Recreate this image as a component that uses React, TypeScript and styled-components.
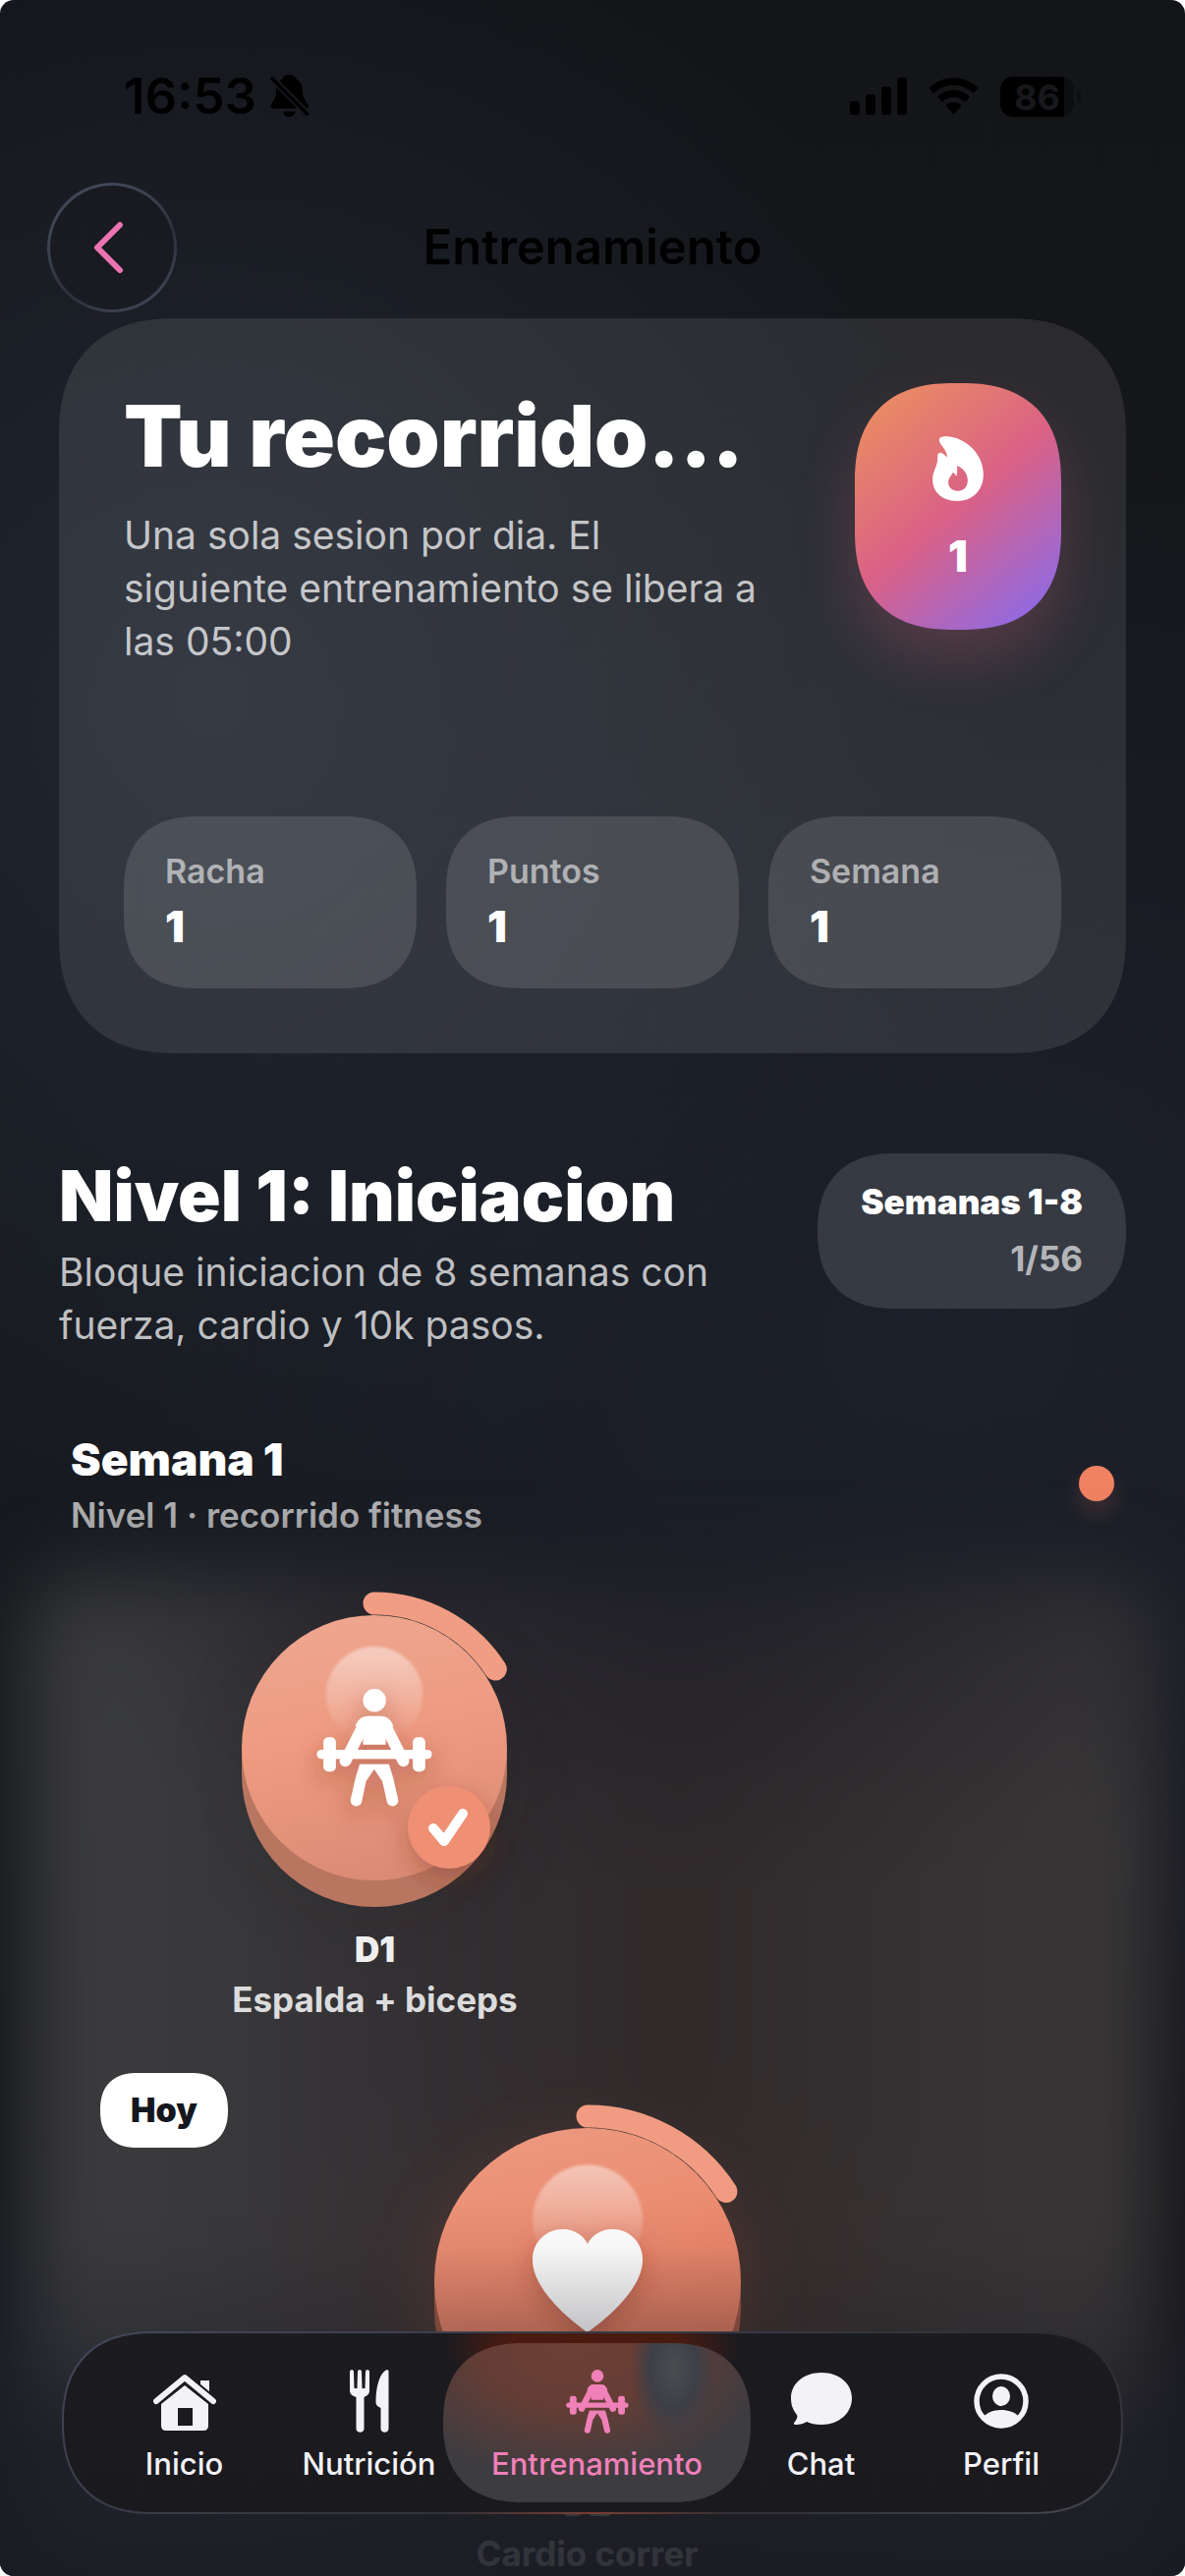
import React from "react";
import styled, { createGlobalStyle, css } from "styled-components";

const GlobalStyle = createGlobalStyle`
  *, *::before, *::after { box-sizing: border-box; }
  body {
    margin: 0;
    background: #ffffff;
    font-family: Inter, "Liberation Sans", sans-serif;
    -webkit-font-smoothing: antialiased;
  }
  h1, h2, h3, p { margin: 0; }
  button { font: inherit; color: inherit; border: 0; padding: 0; background: none; cursor: pointer; }
`;

/* Continuous corners where the browser knows them, plain arcs elsewhere. */
const smoothCorners = (radius: number) => css`
  border-radius: ${radius}px;

  @supports (corner-shape: squircle) {
    corner-shape: superellipse(1.25);
    border-radius: ${Math.round(radius * 1.25)}px;
  }
`;

/* ---------- shell ---------- */

const Screen = styled.div`
  position: relative;
  height: 100vh;
  overflow: hidden;
  border-radius: 14px;
  color: #ffffff;
  background:
    radial-gradient(ellipse 66% 32% at 18% 27%, #202631 0%, rgba(32, 38, 49, 0) 100%),
    radial-gradient(ellipse 90% 34% at 80% 52%, #1c202b 0%, rgba(28, 32, 43, 0) 100%),
    radial-gradient(ellipse 50% 16% at 24% 98%, #1d212b 0%, rgba(29, 33, 43, 0) 100%),
    linear-gradient(#141519 0%, #171a1e 50%, #121317 100%);
`;

const StatusBar = styled.div`
  display: flex;
  align-items: center;
  justify-content: space-between;
  height: 186px;
  padding: 58px 106px 48px 126px;
  color: #000000;
`;

const StatusGroup = styled.div<{ $gap: number }>`
  display: flex;
  align-items: center;
  gap: ${(p) => p.$gap}px;
`;

const Clock = styled.span`
  font-size: 51px;
  line-height: 60px;
  font-weight: 600;
`;

const AppBar = styled.header`
  display: grid;
  grid-template-columns: 132px 1fr 132px;
  align-items: center;
  padding: 0 48px;
`;

const BackButton = styled.button`
  display: grid;
  place-items: center;
  width: 132px;
  height: 132px;
  padding-right: 6px;
  border-radius: 50%;
  border: 3px solid transparent;
  background:
    linear-gradient(#191a20, #191b23) padding-box,
    linear-gradient(150deg, #444b5d 0%, #3a4150 35%, #2c303a 60%, #454c5e 100%) border-box;
`;

const ScreenTitle = styled.h1`
  text-align: center;
  color: #000000;
  font-size: 49px;
  line-height: 60px;
  font-weight: 600;
`;

const Content = styled.main`
  display: flex;
  flex-direction: column;
  padding: 6px 60px 0;
`;

/* ---------- summary card ---------- */

const SummaryCard = styled.section`
  display: flex;
  flex-direction: column;
  gap: 151px;
  padding: 66px;
  background: rgba(255, 255, 255, 0.095);
  ${smoothCorners(96)}
`;

const SummaryTop = styled.div`
  display: flex;
  align-items: flex-start;
  justify-content: space-between;
`;

const SummaryText = styled.div`
  max-width: 660px;
`;

const Headline = styled.h2`
  font-size: 87px;
  line-height: 108px;
  font-weight: 900;
  white-space: nowrap;
`;

const Paragraph = styled.p<{ $top: number }>`
  margin-top: ${(p) => p.$top}px;
  font-size: 39px;
  line-height: 54px;
  font-weight: 400;
  color: rgba(255, 255, 255, 0.72);
`;

const StreakBadge = styled.div`
  display: flex;
  flex-direction: column;
  align-items: center;
  justify-content: center;
  gap: 28px;
  width: 210px;
  height: 251px;
  padding-top: 6px;
  background: linear-gradient(140deg, #ea8c62 8%, #da6186 50%, #8f6ae4 92%);
  box-shadow: 0 30px 60px rgba(218, 97, 134, 0.24);
  ${smoothCorners(80)}
`;

const StreakCount = styled.span`
  font-size: 44px;
  line-height: 56px;
  font-weight: 900;
`;

const StatGrid = styled.dl`
  display: grid;
  grid-template-columns: repeat(3, 1fr);
  gap: 30px;
  margin: 0;
`;

const Stat = styled.div`
  display: flex;
  flex-direction: column;
  gap: 8px;
  padding: 36px 42px 35px;
  background: rgba(255, 255, 255, 0.12);
  ${smoothCorners(60)}
`;

const StatLabel = styled.dt`
  font-size: 34px;
  line-height: 40px;
  font-weight: 600;
  color: rgba(255, 255, 255, 0.58);
`;

const StatValue = styled.dd`
  margin: 0;
  font-size: 44px;
  line-height: 56px;
  font-weight: 900;
`;

/* ---------- level ---------- */

const LevelHeader = styled.section`
  display: flex;
  align-items: flex-start;
  justify-content: space-between;
  margin-top: 102px;
`;

const LevelText = styled.div`
  max-width: 700px;
`;

const LevelTitle = styled.h2`
  font-size: 72px;
  line-height: 86px;
  font-weight: 900;
  white-space: nowrap;
`;

const RangePill = styled.div`
  display: flex;
  flex-direction: column;
  align-items: flex-end;
  gap: 18px;
  padding: 29px 44px 31px;
  font-size: 35px;
  line-height: 40px;
  font-weight: 900;
  white-space: nowrap;
  background: rgba(255, 255, 255, 0.12);
  ${smoothCorners(79)}
`;

const RangeProgress = styled.span`
  font-weight: 700;
  color: rgba(255, 255, 255, 0.65);
`;

const WeekHeader = styled.section`
  display: flex;
  align-items: center;
  justify-content: space-between;
  margin-top: 82px;
  padding: 0 12px;
`;

const WeekTitle = styled.h3`
  font-size: 46px;
  line-height: 54px;
  font-weight: 900;
`;

const WeekSubtitle = styled.p`
  margin-top: 10px;
  font-size: 35px;
  line-height: 40px;
  font-weight: 600;
  color: rgba(255, 255, 255, 0.66);
`;

const WeekDot = styled.span`
  width: 36px;
  height: 36px;
  border-radius: 50%;
  background: #f08262;
  box-shadow: 0 12px 24px rgba(240, 130, 98, 0.2);
`;

/* ---------- path ---------- */

const Path = styled.section`
  position: relative;
  display: flex;
  flex-direction: column;
  gap: 55px;
  padding-top: 58px;

  &::before {
    content: "";
    position: absolute;
    inset: 40px -30px 0;
    border-radius: 60px;
    filter: blur(40px);
    background:
      radial-gradient(ellipse 34% 32% at 50% 80%, rgba(120, 58, 40, 0.18), rgba(120, 58, 40, 0)),
      radial-gradient(ellipse 60% 30% at 60% 0%, rgba(27, 30, 40, 0.7), rgba(27, 30, 40, 0)),
      linear-gradient(90deg, #3c3d40 0%, #39393c 14%, #332f32 36%, #2f292a 58%, #363233 80%, #3b3839 100%);
  }
`;

const PathRow = styled.div`
  position: relative;
  display: grid;
  align-items: start;
  justify-items: start;

  > * { grid-area: 1 / 1; }
`;

const Node = styled.button<{ $at: number; $top: number }>`
  display: flex;
  flex-direction: column;
  align-items: center;
  gap: 11px;
  width: 400px;
  margin: ${(p) => p.$top}px 0 0 calc(${(p) => p.$at}% - 200px);
  font-size: 35px;
  line-height: 40px;

  svg { display: block; overflow: visible; margin-bottom: 12px; }
`;

const NodeDay = styled.span`
  font-weight: 900;
  color: #efefef;
`;

const NodeName = styled.span`
  font-weight: 700;
  color: #dcdcdd;
`;

const TodayTag = styled.span`
  margin-left: 42px;
  padding: 18px 31px;
  background: #ffffff;
  color: #15171e;
  font-size: 34px;
  line-height: 40px;
  font-weight: 900;
  ${smoothCorners(38)}
`;

/* ---------- bottom bar ---------- */

const BottomFade = styled.div`
  position: absolute;
  inset: auto 0 0;
  height: 380px;
  pointer-events: none;
  background: linear-gradient(
    180deg,
    rgba(27, 29, 37, 0) 0%,
    rgba(27, 29, 37, 0.04) 12%,
    rgba(27, 29, 37, 0.26) 34%,
    rgba(27, 29, 37, 0.86) 66%,
    rgba(26, 28, 36, 0.88) 100%
  );
`;

const TabBar = styled.nav`
  position: absolute;
  inset: auto 63px 63px;
  display: grid;
  grid-template-columns: 225fr 151fr 313fr 143fr 224fr;
  padding: 10px;
  border: 2px solid transparent;
  background:
    radial-gradient(ellipse 150px 46px at 50% 8%, rgba(82, 28, 14, 0.85) 60%, rgba(82, 28, 14, 0) 100%) padding-box,
    linear-gradient(#1c1b20, #1a1a1e) padding-box,
    radial-gradient(ellipse 150px 20px at 50% 100%, #7b3f33, rgba(123, 63, 51, 0)) border-box,
    linear-gradient(160deg, #43475a 0%, #383a45 40%, #2b2b30 70%, #45464f 100%) border-box;
  ${smoothCorners(93)}
`;

const Tab = styled.button<{ $active?: boolean }>`
  display: flex;
  flex-direction: column;
  align-items: center;
  gap: 6px;
  height: 162px;
  padding-top: 21px;
  font-size: 31px;
  line-height: 40px;
  font-weight: 500;
  color: ${(p) => (p.$active ? "#f080b8" : "#f2f2f7")};
  ${smoothCorners(81)}

  svg { display: block; height: 76px; }

  ${(p) =>
    p.$active &&
    css`
      background:
        radial-gradient(ellipse 44px 74px at 75% 16%, #4c4d51 0%, #3d3f46 55%, rgba(61, 63, 70, 0) 100%),
        radial-gradient(ellipse 66% 88% at 42% 0%, #6e4036 0%, #653d35 45%, rgba(80, 60, 58, 0) 100%),
        #3d3c41;
    `}
`;

/* ---------- drawings ---------- */

const BellSlash = () => (
  <svg width="40" height="44" viewBox="0 0 40 44" aria-hidden="true">
    <path
      d="M19 0C23 0 25 2 26 4C31 7 33 11 33 17C33 25 38 28 38.500 31C39 33 38 34.500 36 34.500H3C1 34.500 0 33 0.500 31C1.500 28 6 25 6 17C6 10 8 7 12.500 4C13.500 2 15 0 19 0Z"
      fill="#000"
    />
    <path d="M13 37.500H25.500C25 41 22 43 19 43C16 43 13.500 41 13 37.500Z" fill="#000" />
    <path d="M1 3L39 41" stroke="#17191e" strokeWidth="7" />
    <path d="M2 4L37.500 40" stroke="#000" strokeWidth="3.500" strokeLinecap="round" />
  </svg>
);

const Signal = () => (
  <svg width="58" height="38" viewBox="0 0 58 38" fill="#000" aria-hidden="true">
    <rect x="0" y="24" width="10" height="14" rx="3" />
    <rect x="16" y="17" width="10" height="21" rx="3" />
    <rect x="32" y="9" width="10" height="29" rx="3" />
    <rect x="48" y="0" width="10" height="38" rx="3" />
  </svg>
);

const Wifi = () => (
  <svg width="51" height="38" viewBox="0 0 52 38" fill="#000" aria-hidden="true">
    <path d="M26 0C36 0 45 4 51.500 10.500L46.500 16C41 10.700 34 7.500 26 7.500C18 7.500 11 10.700 5.500 16L0.500 10.500C7 4 16 0 26 0Z" />
    <path d="M26 12.500C32.500 12.500 38.500 15 43 19.500L37.800 25C34.600 22 30.500 20 26 20C21.500 20 17.400 22 14.200 25L9 19.500C13.500 15 19.500 12.500 26 12.500Z" />
    <path d="M26 25C29.200 25 32 26.200 34.500 28.500L26 37.500L17.500 28.500C20 26.200 22.800 25 26 25Z" />
  </svg>
);

const BatteryShell = styled.span`
  display: flex;
  align-items: center;
  gap: 3px;

  &::after {
    content: "";
    width: 4px;
    height: 13px;
    border-radius: 0 4px 4px 0;
    background: #0d0e11;
  }
`;

const BatteryLevel = styled.span`
  width: 75px;
  height: 41px;
  border-radius: 13px;
  background: linear-gradient(90deg, #000000 87%, #0d0e11 87%);
  color: #17181c;
  font-size: 36px;
  line-height: 42px;
  font-weight: 700;
  text-align: center;
`;

const Chevron = () => (
  <svg width="32" height="54" viewBox="0 0 32 54" fill="none" aria-hidden="true">
    <path d="M27 4L4 27L27 50" stroke="#ea73b0" strokeWidth="6" strokeLinecap="round" strokeLinejoin="round" />
  </svg>
);

const Flame = () => (
  <svg width="52" height="66" viewBox="327 249 155 198" fill="#fff" fillRule="evenodd" aria-hidden="true">
    <path d="M347 262C346 252 358 249 368 249C430 252 482 305 482 365C482 415 448 447 402 447C356 447 327 420 327 382C327 350 344 342 342 312C341 300 350 297 356 301C364 306 369 311 372 315C371 290 349 277 347 262ZM402 339C418 345 434 362 434 384C434 405 420 416 404 416C387 416 375 405 375 390C375 375 385 370 389 359C394 362 397 367 399 372C402 365 402 350 402 339Z" />
  </svg>
);

/* Lifter figure on a 352 x 360 grid; `fill` also colours the arm strokes. */
const LifterShape = ({ fill }: { fill: string }) => (
  <g fill={fill}>
    <circle cx="176" cy="35" r="35" />
    <path d="M141 170V150L118 112Q128 83 158 83H193Q223 83 233 112L210 150V170Z" />
    <path d="M146 104L87 220M205 104L264 220" stroke={fill} strokeWidth="35" strokeLinecap="round" />
    <rect x="0" y="186" width="351" height="28" rx="14" />
    <rect x="20" y="148" width="38" height="105" rx="15" />
    <rect x="293" y="148" width="38" height="105" rx="15" />
    <path d="M131 230H220L233 272L248 338A17 17 0 0 1 214 344L200 282L175 245L150 282L137 344A17 17 0 0 1 103 338L118 272Z" />
  </g>
);

const HomeIcon = () => (
  <svg width="64" height="76" viewBox="0 -10 64 76" aria-hidden="true">
    <path d="M48 7H57V26L48 18Z" fill="currentColor" />
    <path d="M3 28L32 4L61 28" fill="none" stroke="#1b1b20" strokeWidth="10" strokeLinejoin="round" />
    <path d="M3 28L32 4L61 28" fill="none" stroke="currentColor" strokeWidth="6" strokeLinecap="round" strokeLinejoin="round" />
    <path
      d="M32 12L56 31V53Q56 58 51 58H13Q8 58 8 53V31ZM25 35V53H40V35Z"
      fill="currentColor"
      fillRule="evenodd"
    />
  </svg>
);

const CutleryIcon = () => (
  <svg width="40" height="76" viewBox="0 -6 40 76" fill="currentColor" aria-hidden="true">
    <path d="M2 0C3 0 4 1 4 2L4.500 19H7.500L8 2C8 1 9 0 10 0C11 0 12 1 12 2L12.500 19H15.500L16 2C16 1 17 0 18 0C19 0 20 1 20 2V21C20 25 18 26 14.500 28L14.500 60C14.500 65 6.500 65 6.500 60L6.500 28C2 26 0 25 0 21V2C0 1 1 0 2 0Z" />
    <path d="M38 0C39 0 39.500 1 39.500 2V60C39.500 65 31.500 65 31.500 60V39C28 37 26.500 36 26.500 33C26.500 18 30 5 36 1Z" />
  </svg>
);

const LifterIcon = () => (
  <svg width="66" height="76" viewBox="-7 -30 366 414" aria-hidden="true">
    <LifterShape fill="currentColor" />
  </svg>
);

const ChatIcon = () => (
  <svg width="64" height="76" viewBox="0 -9 64 76" fill="currentColor" aria-hidden="true">
    <path d="M32 0C50 0 63 11 63 26C63 41 50 53 32 53C26 53 21 52 17 50C14 52 10 53 6 53C4 53 3 52 5 50C7 47 8 45 7 43C3 38 1 33 1 26C1 11 14 0 32 0Z" />
  </svg>
);

const ProfileIcon = () => (
  <svg width="56" height="76" viewBox="0 -10 56 76" aria-hidden="true">
    <circle cx="28" cy="28" r="25" fill="none" stroke="currentColor" strokeWidth="5.500" />
    <ellipse cx="28" cy="23" rx="9" ry="10" fill="currentColor" />
    <path d="M10 44C14 39 21 37 28 37C35 37 42 39 46 44C42 50 35 54 28 54C21 54 14 50 10 44Z" fill="currentColor" />
  </svg>
);

type DiscProps = {
  id: string;
  radius: number;
  top: string;
  middle: string;
  bottom: string;
  base: string;
  ring: string;
  gloss: number;
  glow?: boolean;
  children: React.ReactNode;
};

const DEPTH = 27;
const RING = 24;

const Disc = ({ id, radius: r, top, middle, bottom, base, ring, gloss, glow, children }: DiscProps) => {
  const ringRadius = r + RING / 2;
  const c = r + RING;
  const angle = (57 * Math.PI) / 180;
  const endX = c + ringRadius * Math.sin(angle);
  const endY = c - ringRadius * Math.cos(angle);
  return (
    <svg width={c * 2} height={c + r + DEPTH} viewBox={`0 0 ${c * 2} ${c + r + DEPTH}`} aria-hidden="true">
      <defs>
        <linearGradient id={`${id}-face`} x1="0.4" y1="0" x2="0.6" y2="1">
          <stop offset="0" stopColor={top} />
          <stop offset="0.45" stopColor={middle} />
          <stop offset="1" stopColor={bottom} />
        </linearGradient>
        <linearGradient id={`${id}-gloss`} x1="0" y1="0" x2="0" y2="1">
          <stop offset="0" stopColor="#fff" stopOpacity="0.46" />
          <stop offset="1" stopColor="#fff" stopOpacity="0" />
        </linearGradient>
        <filter id={`${id}-soft`} x="-50%" y="-50%" width="200%" height="200%">
          <feGaussianBlur stdDeviation="1.5" />
        </filter>
        <filter id={`${id}-halo`} x="-50%" y="-50%" width="200%" height="200%">
          <feGaussianBlur stdDeviation="36" />
        </filter>
        <filter id={`${id}-drop`} x="-50%" y="-50%" width="200%" height="200%">
          <feDropShadow dx="0" dy="10" stdDeviation="12" floodColor="#7a2c18" floodOpacity="0.34" />
        </filter>
      </defs>
      <circle
        cx={c}
        cy={c + 22}
        r={r}
        fill={glow ? "#a8553e" : "#1a1718"}
        opacity={glow ? 0.28 : 0.26}
        filter={`url(#${id}-halo)`}
      />
      <path d={`M${c - r} ${c}V${c + DEPTH}A${r} ${r} 0 0 0 ${c + r} ${c + DEPTH}V${c}Z`} fill={base} />
      <circle cx={c} cy={c} r={r} fill={`url(#${id}-face)`} />
      <path
        d={`M${c} ${RING / 2}A${ringRadius} ${ringRadius} 0 0 1 ${endX} ${endY}`}
        fill="none"
        stroke={ring}
        strokeWidth={RING - 1}
        strokeLinecap="round"
      />
      <circle cx={c} cy={c - r * 0.4} r={gloss} fill={`url(#${id}-gloss)`} filter={`url(#${id}-soft)`} />
      <g filter={`url(#${id}-drop)`}>{children}</g>
    </svg>
  );
};

const stats = [
  { label: "Racha", value: "1" },
  { label: "Puntos", value: "1" },
  { label: "Semana", value: "1" },
];

const tabs = [
  { label: "Inicio", icon: <HomeIcon /> },
  { label: "Nutrición", icon: <CutleryIcon /> },
  { label: "Entrenamiento", icon: <LifterIcon />, active: true },
  { label: "Chat", icon: <ChatIcon /> },
  { label: "Perfil", icon: <ProfileIcon /> },
];

export default function App() {
  return (
    <>
      <GlobalStyle />
      <Screen>
        <StatusBar>
          <StatusGroup $gap={14}>
            <Clock>16:53</Clock>
            <BellSlash />
          </StatusGroup>
          <StatusGroup $gap={22}>
            <Signal />
            <Wifi />
            <BatteryShell>
              <BatteryLevel>86</BatteryLevel>
            </BatteryShell>
          </StatusGroup>
        </StatusBar>

        <AppBar>
          <BackButton aria-label="Atrás">
            <Chevron />
          </BackButton>
          <ScreenTitle>Entrenamiento</ScreenTitle>
        </AppBar>

        <Content>
          <SummaryCard>
            <SummaryTop>
              <SummaryText>
                <Headline>Tu recorrido...</Headline>
                <Paragraph $top={20}>
                  Una sola sesion por dia. El siguiente entrenamiento se libera a las 05:00
                </Paragraph>
              </SummaryText>
              <StreakBadge>
                <Flame />
                <StreakCount>1</StreakCount>
              </StreakBadge>
            </SummaryTop>
            <StatGrid>
              {stats.map((s) => (
                <Stat key={s.label}>
                  <StatLabel>{s.label}</StatLabel>
                  <StatValue>{s.value}</StatValue>
                </Stat>
              ))}
            </StatGrid>
          </SummaryCard>

          <LevelHeader>
            <LevelText>
              <LevelTitle>Nivel 1: Iniciacion</LevelTitle>
              <Paragraph $top={8}>Bloque iniciacion de 8 semanas con fuerza, cardio y 10k pasos.</Paragraph>
            </LevelText>
            <RangePill>
              <span>Semanas 1-8</span>
              <RangeProgress>1/56</RangeProgress>
            </RangePill>
          </LevelHeader>

          <WeekHeader>
            <div>
              <WeekTitle>Semana 1</WeekTitle>
              <WeekSubtitle>Nivel 1 · recorrido fitness</WeekSubtitle>
            </div>
            <WeekDot />
          </WeekHeader>

          <Path>
            <PathRow>
              <Node $at={29.6} $top={0}>
                <Disc
                  id="d1"
                  radius={135}
                  top="#eea68f"
                  middle="#ee9a80"
                  bottom="#da8b75"
                  base="#b87661"
                  ring="#f19d84"
                  gloss={49}
                >
                  <g transform="translate(100.500 99) scale(0.3333)">
                    <LifterShape fill="#fff" />
                  </g>
                  <circle cx="235" cy="240" r="42" fill="#ef8f73" />
                  <path
                    d="M219 241L230 254L249 226"
                    fill="none"
                    stroke="#fff"
                    strokeWidth="10"
                    strokeLinecap="round"
                    strokeLinejoin="round"
                  />
                </Disc>
                <NodeDay>D1</NodeDay>
                <NodeName>Espalda + biceps</NodeName>
              </Node>
            </PathRow>

            <PathRow>
              <TodayTag>Hoy</TodayTag>
              <Node $at={49.5} $top={32}>
                <Disc
                  id="d2"
                  radius={156}
                  top="#ec987e"
                  middle="#ea876c"
                  bottom="#d26f54"
                  base="#9c5643"
                  ring="#f19c82"
                  gloss={56}
                  glow
                >
                  <path
                    d="M180 232C172 226 124 192 124 158C124 140 138 127 155 127C167 127 176 134 180 142C184 134 193 127 205 127C222 127 236 140 236 158C236 192 188 226 180 232Z"
                    fill="#fff"
                  />
                </Disc>
                <NodeDay>D2</NodeDay>
                <NodeName>Cardio correr</NodeName>
              </Node>
            </PathRow>
          </Path>
        </Content>

        <BottomFade />
        <TabBar>
          {tabs.map((t) => (
            <Tab key={t.label} $active={t.active} aria-current={t.active ? "page" : undefined}>
              {t.icon}
              {t.label}
            </Tab>
          ))}
        </TabBar>
      </Screen>
    </>
  );
}
